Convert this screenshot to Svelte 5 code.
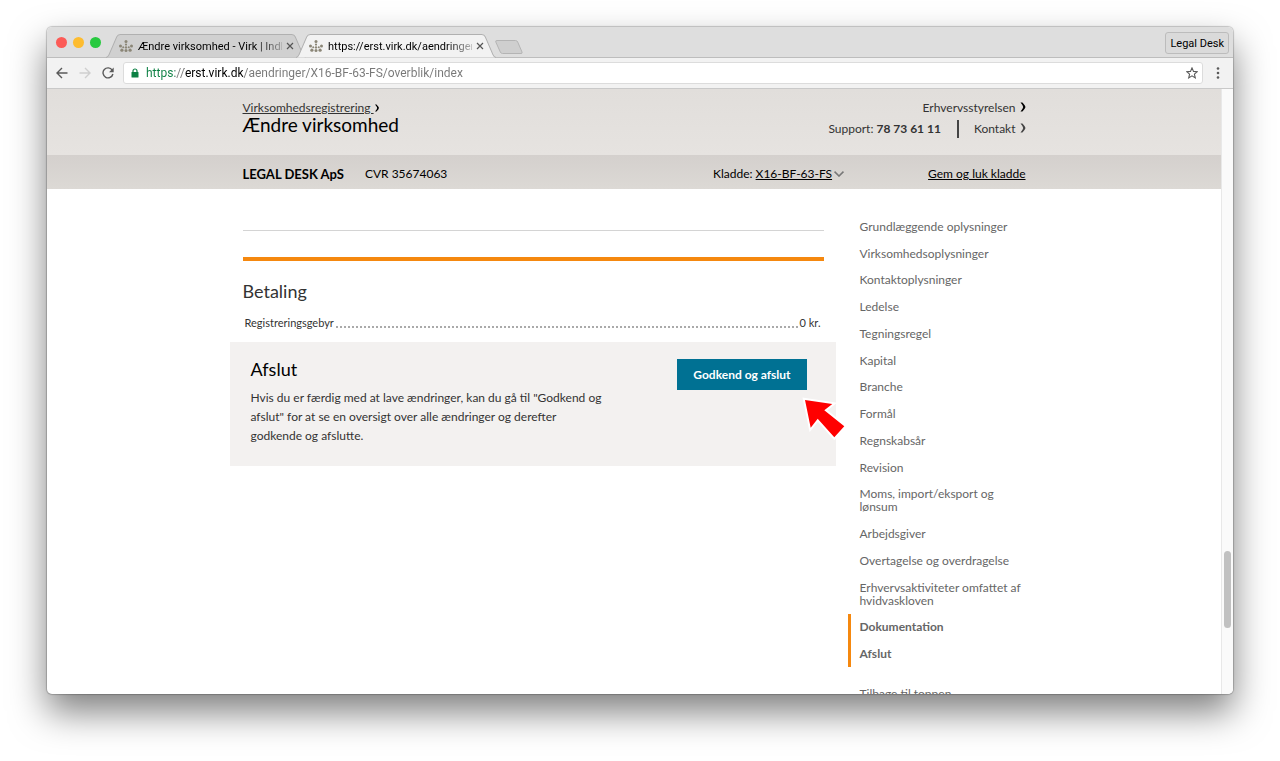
<script>
  const sections = [
    'Grundlæggende oplysninger',
    'Virksomhedsoplysninger',
    'Kontaktoplysninger',
    'Ledelse',
    'Tegningsregel',
    'Kapital',
    'Branche',
    'Formål',
    'Regnskabsår',
    'Revision',
    'Moms, import/eksport og lønsum',
    'Arbejdsgiver',
    'Overtagelse og overdragelse',
    'Erhvervsaktiviteter omfattet af hvidvaskloven',
    'Dokumentation',
    'Afslut'
  ];
  const current = ['Dokumentation', 'Afslut'];

  const tabs = [
    { title: 'Ændre virksomhed - Virk | Indb', active: false },
    { title: 'https://erst.virk.dk/aendringer/', active: true }
  ];

  let address = $state('https://erst.virk.dk/aendringer/X16-BF-63-FS/overblik/index');
</script>

{#snippet chevron()}
  <svg class="chevron" viewBox="0 0 6 10" aria-hidden="true">
    <path d="M0.5 0.5H2.4Q5.4 3.6 5.4 5T2.4 9.5H0.5Q3.2 6.4 3.2 5T0.5 0.5Z" fill="currentColor" />
  </svg>
{/snippet}

<div class="desktop">
  <div class="window">
    <div class="tabstrip">
      <div class="lights">
        <span class="red"></span><span class="yellow"></span><span class="green"></span>
      </div>
      <div class="tabs">
        {#each tabs as tab}
          <div class="tab" class:active={tab.active}>
            <svg class="shape" viewBox="0 0 196 25" preserveAspectRatio="none" aria-hidden="true">
              <path
                d="M0 24.5Q2 24 3 21.5L10.500 3Q11.500 0.500 14 0.500H182Q184.500 0.500 185.500 3L193 21.500Q194 24 196 24.500"
                fill={tab.active ? '#f2f2f2' : '#d0d0d0'}
                stroke="#b0b0b0"
              />
            </svg>
            <svg class="favicon" viewBox="0 0 14 12" aria-hidden="true">
              <g fill="#8b8677">
                <circle cx="7" cy="1.500" r="1.500" />
                <circle cx="7" cy="4.600" r="1.100" />
                <circle cx="7" cy="7.400" r="1.200" />
                <circle cx="7" cy="10.500" r="1.500" />
                <circle cx="4.200" cy="7.200" r="1" />
                <circle cx="9.800" cy="7.200" r="1" />
                <circle cx="1.500" cy="6" r="1.500" />
                <circle cx="12.500" cy="6" r="1.500" />
                <circle cx="2.900" cy="10.200" r="1.600" />
                <circle cx="11.100" cy="10.200" r="1.600" />
              </g>
            </svg>
            <span class="title">{tab.title}</span>
            <button class="close" aria-label="Luk fane">
              <svg viewBox="0 0 8 8"><path d="M1 1L7 7M7 1L1 7" stroke="#555" stroke-width="1.200" /></svg>
            </button>
          </div>
        {/each}
        <button class="newtab" aria-label="Ny fane">
          <svg viewBox="0 0 28 14">
            <path d="M2 0.500H20.500Q22 0.500 22.700 2L27 12Q27.500 13.500 26 13.500H7.500Q6 13.500 5.300 12L0.800 2Q0.300 0.500 2 0.500Z" fill="#cfcfcf" stroke="#b4b4b4" />
          </svg>
        </button>
      </div>
      <button class="profile">Legal Desk</button>
    </div>

    <div class="toolbar">
      <button aria-label="Tilbage">
        <svg viewBox="0 0 12 12"><path d="M11.500 6H1.200M6 1L1 6L6 11" fill="none" stroke="#5a5a5a" stroke-width="1.400" /></svg>
      </button>
      <button aria-label="Frem">
        <svg viewBox="0 0 12 12"><path d="M0.500 6H10.800M6 1L11 6L6 11" fill="none" stroke="#cfcfcf" stroke-width="1.400" /></svg>
      </button>
      <button aria-label="Genindlæs">
        <svg viewBox="0 0 12 12">
          <path d="M10.200 3.100A5 5 0 1 0 10.900 7" fill="none" stroke="#5a5a5a" stroke-width="1.400" />
          <path d="M11.700 0.500V5.200H7Z" fill="#5a5a5a" />
        </svg>
      </button>
      <div class="omnibox">
        <svg class="lock" viewBox="0 0 8 10" aria-hidden="true">
          <path d="M2 4.500V3A2 2 0 0 1 6 3V4.500" fill="none" stroke="#0b8043" stroke-width="1.200" />
          <rect x="0.500" y="4" width="7" height="5.500" rx="0.600" fill="#0b8043" />
        </svg>
        <input aria-label="Adresse" type="text" bind:value={address} spellcheck="false" />
        <button class="star" aria-label="Bogmærk">
          <svg viewBox="0 0 12 12">
            <path d="M6 0.900L7.500 4.400L11.300 4.700L8.400 7.200L9.300 10.900L6 8.900L2.700 10.900L3.600 7.200L0.700 4.700L4.500 4.400Z" fill="none" stroke="#5a5a5a" stroke-width="1.100" />
          </svg>
        </button>
      </div>
      <button class="menu" aria-label="Menu">
        <svg viewBox="0 0 12 12">
          <g fill="#5a5a5a"><circle cx="6" cy="1.500" r="1.300" /><circle cx="6" cy="6" r="1.300" /><circle cx="6" cy="10.500" r="1.300" /></g>
        </svg>
      </button>
    </div>

    <div class="viewport">
      <div class="page">
        <header class="site">
          <div class="wrap">
            <div>
              <a class="crumb" href="#registrering"><u>Virksomhedsregistrering&nbsp;</u>{@render chevron()}</a>
              <h1>Ændre virksomhed</h1>
            </div>
            <div class="contact">
              <a class="agency" href="#styrelsen">Erhvervsstyrelsen{@render chevron()}</a>
              <div class="support">
                <span>Support: <b>78 73 61 11</b></span>
                <a href="#kontakt">Kontakt{@render chevron()}</a>
              </div>
            </div>
          </div>
        </header>

        <div class="company">
          <div class="wrap">
            <strong>LEGAL DESK ApS</strong>
            <span class="cvr">CVR 35674063</span>
            <span class="draft">
              Kladde: <button><u>X16-BF-63-FS</u><svg viewBox="0 0 10 6" aria-hidden="true"><path d="M0.500 0.700L5 5L9.500 0.700" fill="none" stroke="#777" stroke-width="1.600" /></svg></button>
            </span>
            <a class="save" href="#gem">Gem og luk kladde</a>
          </div>
        </div>

        <div class="wrap body">
          <main>
            <hr />
            <section class="payment">
              <h2>Betaling</h2>
              <dl>
                <div>
                  <dt>Registreringsgebyr</dt>
                  <dd>0 kr.</dd>
                </div>
              </dl>
            </section>
            <section class="finish">
              <div class="copy">
                <h2>Afslut</h2>
                <p>Hvis du er færdig med at lave ændringer, kan du gå til "Godkend og afslut" for at se en oversigt over alle ændringer og derefter godkende og afslutte.</p>
              </div>
              <div class="action">
                <button>Godkend og afslut</button>
                <svg class="pointer" viewBox="0 0 44 42" aria-hidden="true">
                  <path d="M2 2L29.300 6L21.300 12.300L41.300 28.300L31.300 39.300L14.700 20.700L7.700 29.700Z" fill="#fff" stroke="#fff" stroke-width="4" />
                  <path d="M2 2L29.300 6L21.300 12.300L41.300 28.300L31.300 39.300L14.700 20.700L7.700 29.700Z" fill="#f00" />
                </svg>
              </div>
            </section>
          </main>
          <nav>
            <ul>
              {#each sections as name}
                <li class:current={current.includes(name)}><a href="#{name}">{name}</a></li>
              {/each}
            </ul>
            <a class="top" href="#top">Tilbage til toppen</a>
          </nav>
        </div>
      </div>
      <div class="scrollbar"><div class="thumb"></div></div>
    </div>
  </div>
</div>

<style>
  :global(body) {
    margin: 0;
    background: #fff;
  }
  .desktop {
    box-sizing: border-box;
    height: 100vh;
    padding: 27px 47px 67px;
    overflow: hidden;
    font-family: Lato, 'Open Sans', sans-serif;
    font-size: 12px;
    color: #333;
  }
  .window {
    display: flex;
    flex-direction: column;
    height: 100%;
    border-radius: 5px;
    overflow: hidden;
    background: #fff;
    box-shadow: 0 0 1px 1px rgba(0, 0, 0, 0.2), 0 18px 36px rgba(0, 0, 0, 0.5);
  }
  button {
    padding: 0;
    border: 0;
    background: none;
    font: inherit;
    color: inherit;
    cursor: pointer;
  }
  a {
    color: inherit;
    text-decoration: none;
  }
  svg {
    display: block;
    flex: none;
  }
  h1,
  h2,
  p,
  dl,
  dd,
  ul {
    margin: 0;
    padding: 0;
    font-weight: 400;
  }

  .tabstrip {
    display: flex;
    align-items: flex-end;
    flex: none;
    height: 31px;
    background: #dedede;
    box-shadow: inset 0 -1px #bdbdbd;
    font-family: Roboto, sans-serif;
    font-size: 11px;
    color: #000;
  }
  .lights {
    display: flex;
    gap: 6px;
    padding: 0 5px 10px 9px;
  }
  .lights span {
    width: 11px;
    height: 11px;
    border-radius: 50%;
  }
  .red {
    background: #fc5b57;
  }
  .yellow {
    background: #fdbc2f;
  }
  .green {
    background: #28c940;
  }
  .tabs {
    display: flex;
    flex: 1;
    align-items: flex-end;
  }
  .tab {
    position: relative;
    display: flex;
    align-items: center;
    box-sizing: border-box;
    width: 200px;
    height: 24px;
    margin-right: -10px;
    padding: 0 12px 0 13px;
  }
  .tab.active {
    z-index: 1;
  }
  .shape {
    position: absolute;
    inset: 0;
    width: 100%;
    height: 100%;
  }
  .favicon {
    position: relative;
    width: 14px;
    height: 12px;
    margin-right: 5px;
  }
  .title {
    position: relative;
    flex: 1;
    min-width: 0;
    white-space: nowrap;
    mask-image: linear-gradient(to right, #000 118px, transparent 152px);
  }
  .close {
    position: relative;
    margin-left: 4px;
  }
  .close svg {
    width: 8px;
    height: 8px;
  }
  .newtab {
    margin: 0 0 4px 9px;
  }
  .newtab svg {
    width: 28px;
    height: 14px;
  }
  .profile {
    height: 22px;
    margin: 0 4px 4px 0;
    padding: 0 4px;
    border: 1px solid #bcbcbc;
    border-radius: 3px;
    background: #dadada;
  }

  .toolbar {
    display: flex;
    align-items: center;
    flex: none;
    gap: 11px;
    height: 30px;
    padding: 0 9px;
    background: #f2f2f2;
    border-bottom: 1px solid #c9c9c9;
  }
  .toolbar svg {
    width: 12px;
    height: 12px;
  }
  .omnibox {
    display: flex;
    align-items: center;
    flex: 1;
    gap: 7px;
    height: 20px;
    margin: 0 -2px;
    padding: 0 4px 0 7px;
    border: 1px solid #dcdcdc;
    border-radius: 3px;
    background: #fff;
  }
  .toolbar .lock {
    width: 8px;
    height: 10px;
  }
  .omnibox input {
    flex: 1;
    min-width: 0;
    padding: 0;
    border: 0;
    outline: 0;
    font-family: Roboto, sans-serif;
    font-size: 12px;
    color: transparent;
    caret-color: #000;
    background: linear-gradient(to right, #0b8043 29px, #777 29px, #777 38px, #000 38px, #000 97px, #777 97px);
    background-clip: text;
  }

  .viewport {
    display: flex;
    flex: 1;
    min-height: 0;
  }
  .page {
    flex: 1;
    overflow: hidden;
  }
  .scrollbar {
    box-sizing: border-box;
    width: 12px;
    padding: 0 2px 66px;
    display: flex;
    flex-direction: column;
    justify-content: flex-end;
    border-left: 1px solid #e8e8e8;
    background: #fafafa;
  }
  .thumb {
    height: 77px;
    border-radius: 4px;
    background: #c1c1c1;
  }

  .wrap {
    display: flex;
    max-width: 783px;
    margin: 0 auto;
  }
  .site {
    height: 66px;
    background: linear-gradient(#e1dedb, #e6e3e0);
  }
  .site .wrap {
    justify-content: space-between;
    padding-top: 10px;
  }
  .chevron {
    display: inline-block;
    width: 6px;
    height: 10px;
    margin-left: 4px;
    color: #000;
  }
  .crumb {
    display: block;
    line-height: 17px;
  }
  .crumb .chevron {
    height: 8px;
    margin-left: 0;
  }
  h1 {
    font-size: 19px;
    line-height: 17px;
    color: #000;
  }
  .contact {
    display: flex;
    flex-direction: column;
    align-items: flex-end;
  }
  .agency {
    line-height: 18px;
  }
  .support {
    display: flex;
    align-items: center;
    margin-top: 3px;
    line-height: 18px;
  }
  .support a {
    margin-left: 16px;
    padding-left: 15px;
    border-left: 2px solid #444;
  }
  .support .chevron {
    color: #444;
  }
  .company {
    background: linear-gradient(#d4d0cd, #dcd9d5);
    color: #000;
  }
  .company .wrap {
    align-items: center;
    height: 34px;
    padding-top: 3px;
    box-sizing: border-box;
  }
  .company strong {
    font-size: 13px;
  }
  .cvr {
    flex: 1;
    padding-left: 21px;
  }
  .draft button {
    display: inline-flex;
    align-items: center;
    gap: 2px;
  }
  .draft svg {
    width: 10px;
    height: 6px;
  }
  .save {
    margin-left: 84px;
    text-decoration: underline;
  }

  .body {
    align-items: flex-start;
  }
  main {
    flex: 1;
    padding-top: 41px;
  }
  hr {
    height: 1px;
    margin: 0 0 26px;
    border: 0;
    background: #d4d4d4;
  }
  .payment {
    border-top: 4px solid #f5880f;
    padding-top: 17px;
  }
  h2 {
    font-size: 18px;
    line-height: 26px;
  }
  dl {
    padding: 11px 3px 11px 2px;
    font-size: 11px;
    line-height: 16px;
  }
  dl div {
    display: flex;
    align-items: center;
    gap: 2px;
  }
  dl div::before {
    content: '';
    order: 1;
    flex: 1;
    height: 2px;
    margin-top: 8px;
    background: repeating-linear-gradient(to right, #aaa 0 2px, transparent 2px 4px);
  }
  dd {
    order: 2;
  }
  .finish {
    display: flex;
    justify-content: space-between;
    margin: 0 -12px 0 -13px;
    padding: 14px 29px 21px 21px;
    background: #f3f1f0;
  }
  .finish h2 {
    color: #000;
  }
  .copy {
    width: 356px;
  }
  .copy p {
    padding-top: 6px;
    line-height: 19px;
  }
  .action {
    position: relative;
    padding-top: 3px;
  }
  .action button {
    height: 31px;
    padding: 0 16px;
    background: #007193;
    color: #fff;
    font-weight: 700;
  }
  .pointer {
    position: absolute;
    top: 42px;
    right: -40px;
    width: 44px;
    height: 42px;
    overflow: visible;
  }

  nav {
    width: 178px;
    margin-left: 24px;
    padding-top: 24px;
    line-height: 13px;
    color: #666;
  }
  ul {
    display: flex;
    flex-direction: column;
    height: 454px;
    list-style: none;
  }
  li {
    display: flex;
    align-items: center;
    flex: 1 0 auto;
    padding-left: 9px;
    border-left: 3px solid transparent;
  }
  li.current {
    border-color: #f5880f;
    font-weight: 700;
  }
  .top {
    display: block;
    padding: 20px 0 0 12px;
  }
</style>
